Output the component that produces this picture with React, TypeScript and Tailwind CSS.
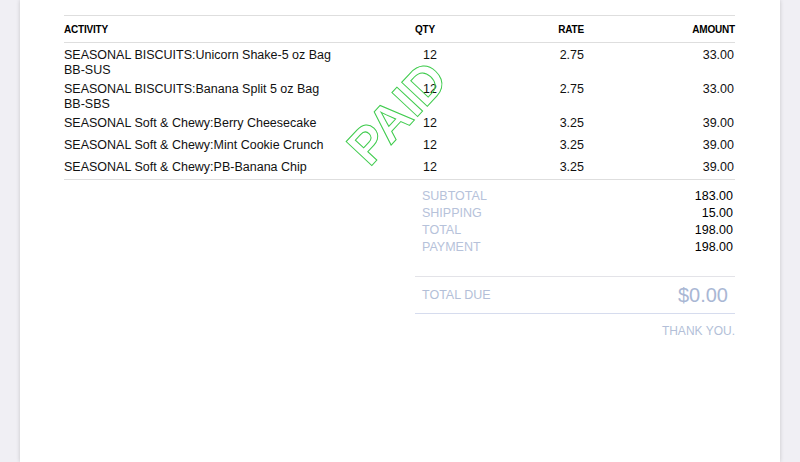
import React from 'react';

type Line = {
  name: string;
  sku?: string;
  qty: string;
  rate: string;
  amount: string;
};

const lines: Line[] = [
  { name: 'SEASONAL BISCUITS:Unicorn Shake-5 oz Bag', sku: 'BB-SUS', qty: '12', rate: '2.75', amount: '33.00' },
  { name: 'SEASONAL BISCUITS:Banana Split 5 oz Bag', sku: 'BB-SBS', qty: '12', rate: '2.75', amount: '33.00' },
  { name: 'SEASONAL Soft & Chewy:Berry Cheesecake', qty: '12', rate: '3.25', amount: '39.00' },
  { name: 'SEASONAL Soft & Chewy:Mint Cookie Crunch', qty: '12', rate: '3.25', amount: '39.00' },
  { name: 'SEASONAL Soft & Chewy:PB-Banana Chip', qty: '12', rate: '3.25', amount: '39.00' },
];

const totals = [
  { label: 'SUBTOTAL', value: '183.00' },
  { label: 'SHIPPING', value: '15.00' },
  { label: 'TOTAL', value: '198.00' },
  { label: 'PAYMENT', value: '198.00' },
];

const App: React.FC = () => {
  return (
    <div className="min-h-[462px] bg-[#f0eff4] px-[20px] font-['Liberation_Sans',Arial,sans-serif] text-black">
      <div className="relative min-h-[462px] bg-white pt-[15px] pl-[44px] pr-[45px] shadow-[0_0_4px_rgba(0,0,0,0.18)]">
        {/* column headers */}
        <div className="flex h-[28px] items-center border-y border-[#dedede] text-[10px] font-bold tracking-[-0.2px]">
          <div className="w-[351px]">ACTIVITY</div>
          <div className="w-[85px]">QTY</div>
          <div className="w-[84px] text-right">RATE</div>
          <div className="flex-1 text-right">AMOUNT</div>
        </div>

        {/* line items */}
        <div className="mt-[3px] border-b border-[#dedede] text-[12.5px] leading-[15px] text-[#111]">
          {lines.map((l, i) => (
            <div
              key={i}
              className={`flex pt-[2px] ${l.sku ? 'h-[34px]' : i === lines.length - 1 ? 'h-[21px]' : 'h-[22px]'}`}
            >
              <div className="w-[351px]">
                <div>{l.name}</div>
                {l.sku && <div>{l.sku}</div>}
              </div>
              <div className="w-[85px] pl-[8px]">{l.qty}</div>
              <div className="w-[84px] text-right">{l.rate}</div>
              <div className="flex-1 pr-[1px] text-right">{l.amount}</div>
            </div>
          ))}
        </div>

        {/* totals */}
        <div className="ml-[351px] pt-[8px]">
          {totals.map((t) => (
            <div key={t.label} className="flex h-[17px] items-center justify-between pl-[7px] pr-[2px] text-[12.5px]">
              <span className="text-[#b6c2da]">{t.label}</span>
              <span>{t.value}</span>
            </div>
          ))}

          <div className="mt-[20px] flex h-[38px] items-center justify-between border-y border-t-[#e3e3e8] border-b-[#d6dcee] pl-[7px] pr-[7px]">
            <span className="text-[12.5px] text-[#b3bfd8]">TOTAL DUE</span>
            <span className="text-[20px] text-[#a9b7d4]">$0.00</span>
          </div>

          <div className="mt-[8px] text-right text-[12px] text-[#b3bfd8]">THANK YOU.</div>
        </div>

        {/* paid stamp */}
        <div className="pointer-events-none absolute left-[377px] top-[113px] -translate-x-1/2 -translate-y-1/2 rotate-[-47deg] text-[51px] font-bold leading-none text-transparent [-webkit-text-stroke:1px_#3fcb4d]">
          PAID
        </div>
      </div>
    </div>
  );
};

export default App;
